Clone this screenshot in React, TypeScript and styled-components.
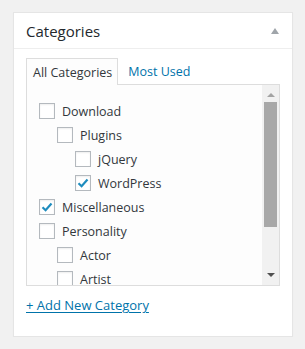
import React from "react";
import styled, { createGlobalStyle } from "styled-components";

const GlobalStyle = createGlobalStyle`
  html, body {
    margin: 0;
    padding: 0;
    background: #f1f1f1;
    font-family: "Open Sans", "Liberation Sans", sans-serif;
  }
`;

const Page = styled.div`
  padding: 12px 0 0 13px;
`;

const Postbox = styled.div`
  width: 278px;
  background: #fff;
  border: 1px solid #e5e5e5;
  box-shadow: 0 1px 1px rgba(0, 0, 0, 0.04);
`;

const Header = styled.div`
  display: flex;
  align-items: center;
  justify-content: space-between;
  height: 35px;
  padding: 0 13px 0 12px;
  border-bottom: 1px solid #eee;
`;

const Title = styled.h2`
  margin: 0;
  font-size: 15px;
  font-weight: 400;
  color: #23282d;
`;

const Inside = styled.div`
  padding: 8px 12px 21px 12px;
`;

const Tabs = styled.div`
  display: flex;
  align-items: flex-end;
  height: 27px;
`;

const Tab = styled.div<{ $active?: boolean }>`
  position: relative;
  z-index: 1;
  height: ${(p) => (p.$active ? "27px" : "26px")};
  box-sizing: border-box;
  display: flex;
  align-items: center;
  padding: ${(p) => (p.$active ? "0 5px 0 6px" : "0 10px")};
  margin-bottom: ${(p) => (p.$active ? "-1px" : "0")};
  font-size: 12.5px;
  color: ${(p) => (p.$active ? "#32373c" : "#0073aa")};
  background: ${(p) => (p.$active ? "#fdfdfd" : "transparent")};
  border: ${(p) => (p.$active ? "1px solid #ddd" : "none")};
  border-bottom: none;
`;

const Panel = styled.div`
  display: flex;
  height: 200px;
  width: 252px;
  border: 1px solid #ddd;
  background: #fdfdfd;
  overflow: hidden;
`;

const List = styled.ul`
  flex: 1;
  list-style: none;
  margin: 0;
  padding: 14px 0 0 12px;
`;

const Item = styled.li<{ $level: number }>`
  display: flex;
  align-items: center;
  height: 24px;
  padding-left: ${(p) => p.$level * 18}px;
  font-size: 12.5px;
  color: #32373c;
`;

const Box = styled.span`
  width: 16px;
  height: 16px;
  box-sizing: border-box;
  border: 1px solid #b4b9be;
  background: #fff;
  box-shadow: inset 0 1px 2px rgba(0, 0, 0, 0.07);
  margin-right: 7px;
  display: flex;
  align-items: center;
  justify-content: center;
  flex-shrink: 0;
`;

const Scrollbar = styled.div`
  width: 17px;
  background: #f1f1f1;
  display: flex;
  flex-direction: column;
  align-items: center;
`;

const Arrow = styled.div<{ $down?: boolean; $color: string }>`
  width: 0;
  height: 0;
  border-left: 4px solid transparent;
  border-right: 4px solid transparent;
  ${(p) =>
    p.$down
      ? `border-top: 4px solid ${p.$color}; margin-top: auto; margin-bottom: 8px;`
      : `border-bottom: 4px solid ${p.$color}; margin-top: 8px;`}
`;

const Thumb = styled.div`
  width: 13px;
  height: 125px;
  margin-top: 5px;
  background: #a8a8a8;
`;

const Toggle = styled.span`
  width: 0;
  height: 0;
  border-left: 4px solid transparent;
  border-right: 4px solid transparent;
  border-bottom: 6px solid #a0a5aa;
`;

const AddLink = styled.a`
  display: inline-block;
  margin-top: 10px;
  font-size: 13px;
  line-height: 18px;
  color: #0073aa;
  text-decoration: underline;
  text-underline-offset: 2px;
`;

const items: { name: string; level: number; checked?: boolean }[] = [
  { name: "Download", level: 0 },
  { name: "Plugins", level: 1 },
  { name: "jQuery", level: 2 },
  { name: "WordPress", level: 2, checked: true },
  { name: "Miscellaneous", level: 0, checked: true },
  { name: "Personality", level: 0 },
  { name: "Actor", level: 1 },
  { name: "Artist", level: 1 },
];

const Check = () => (
  <svg width="12" height="12" viewBox="0 0 12 12">
    <path d="M1.5 6.2 L4.6 9.2 L10.5 2.6" fill="none" stroke="#1e8cbe" strokeWidth="2.2" />
  </svg>
);

export default function App() {
  return (
    <>
      <GlobalStyle />
      <Page>
        <Postbox>
          <Header>
            <Title>Categories</Title>
            <Toggle />
          </Header>
          <Inside>
            <Tabs>
              <Tab $active>All Categories</Tab>
              <Tab>Most Used</Tab>
            </Tabs>
            <Panel>
              <List>
                {items.map((it) => (
                  <Item key={it.name} $level={it.level}>
                    <Box>{it.checked && <Check />}</Box>
                    {it.name}
                  </Item>
                ))}
              </List>
              <Scrollbar>
                <Arrow $color="#a3a3a3" />
                <Thumb />
                <Arrow $down $color="#505050" />
              </Scrollbar>
            </Panel>
            <AddLink href="#">+ Add New Category</AddLink>
          </Inside>
        </Postbox>
      </Page>
    </>
  );
}
